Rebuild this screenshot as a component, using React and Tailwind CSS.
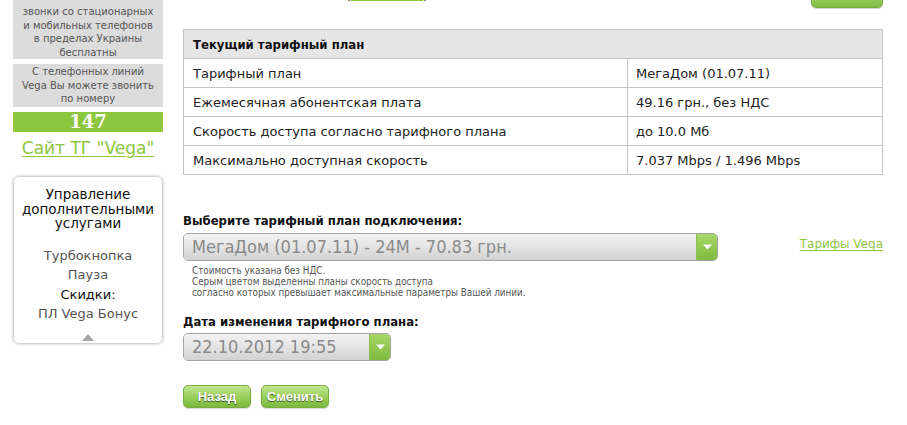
const verdana = "font-['DejaVu_Sans',Verdana,sans-serif]";
const tahoma = "font-['DejaVu_Sans_Condensed','DejaVu_Sans',Tahoma,sans-serif]";

const ROWS = [
  ["Тарифный план", "МегаДом (01.07.11)"],
  ["Ежемесячная абонентская плата", "49.16 грн., без НДС"],
  ["Скорость доступа согласно тарифного плана", "до 10.0 Мб"],
  ["Максимально доступная скорость", "7.037 Mbps / 1.496 Mbps"],
];

function ArrowDown() {
  return (
    <svg width="9" height="6" viewBox="0 0 9 6" className="block">
      <path d="M0 0.5 H9 L4.5 5.5 Z" fill="#fff" />
    </svg>
  );
}

function FakeSelect({ value, width }) {
  return (
    <div
      className={`${width} h-[28px] flex rounded-[5px] border border-[#a3a3a3] overflow-hidden shadow-[inset_0_1px_2px_rgba(0,0,0,0.25)]`}
    >
      <div className="flex-1 flex items-center pl-[8px] bg-gradient-to-b from-[#f2f2f2] via-[#e4e4e4] to-[#d2d2d2]">
        <span className={`${tahoma} text-[18px] leading-none text-[#8a8a8a] whitespace-nowrap`}>
          {value}
        </span>
      </div>
      <div className="w-[21px] flex items-center justify-center bg-gradient-to-b from-[#a8d867] to-[#7fba3e] border-l border-[#8cbf55]">
        <ArrowDown />
      </div>
    </div>
  );
}

function GreenButton({ children }) {
  return (
    <button className="w-[68px] h-[23px] rounded-[5px] border border-[#79ad3f] bg-gradient-to-b from-[#c2e58f] via-[#9cd05c] to-[#7cb83e] text-white font-bold text-[13px] leading-none font-['Liberation_Sans',Arial,sans-serif] [text-shadow:0_1px_1px_rgba(0,0,0,0.6)] shadow-[0_1px_1px_rgba(0,0,0,0.15)]">
      {children}
    </button>
  );
}

export default function App() {
  return (
    <div className={`${verdana} w-[907px] h-[425px] overflow-hidden bg-white text-[#222]`}>
      <div className="flex">
        {/* left column */}
        <div className="ml-[13px] w-[150px] flex flex-col">
          <div className="bg-[#dcdcdc] text-[#555] text-[10px] leading-[13.5px] text-center pt-[5px] h-[59px]">
            звонки со стационарных
            <br />и мобильных телефонов
            <br />в пределах Украины
            <br />бесплатны
          </div>
          <div className="mt-[5px] bg-[#dcdcdc] text-[#555] text-[10px] leading-[13.5px] text-center pt-[1px] h-[43px]">
            С телефонных линий
            <br />Vega Вы можете звонить
            <br />по номеру
          </div>
          <div className="mt-[5px] h-[20px] bg-[#8dc63f] flex items-center justify-center text-white font-bold text-[18px] leading-none font-['DejaVu_Serif',Georgia,serif]">
            147
          </div>
          <a
            href="#"
            className="mt-[7px] text-center text-[17px] leading-[18px] text-[#8dc63f] underline underline-offset-2 whitespace-nowrap"
          >
            Сайт ТГ "Vega"
          </a>
          <div className="mt-[19px] h-[168px] rounded-[6px] border border-[#d0d0d0] shadow-[0_0_3px_rgba(0,0,0,0.25)] flex flex-col items-center pt-[10px]">
            <div className="text-[13.5px] leading-[14.5px] text-center text-[#111]">
              Управление
              <br />
              дополнительными
              <br />
              услугами
            </div>
            <div className="mt-[15px] flex flex-col items-center text-[13px] leading-[19.5px]">
              <span className="text-[#555]">Турбокнопка</span>
              <span className="text-[#555]">Пауза</span>
              <span className="text-[#111]">Скидки:</span>
              <span className="text-[#555]">ПЛ Vega Бонус</span>
            </div>
            <svg width="12" height="7" viewBox="0 0 12 7" className="mt-[10px]">
              <path d="M0 7 L6 0 L12 7 Z" fill="#a8a8a8" />
            </svg>
          </div>
        </div>

        {/* main column */}
        <div className="ml-[20px] w-[700px] flex flex-col">
          <div className="h-[9px] overflow-hidden flex items-end">
            <span className="ml-[163px] mb-[5px] flex items-end text-[13px] leading-[16px] whitespace-nowrap">
              (
              <span className="inline-block w-[72px] h-[3px] mb-[3px] border-b border-[#8dc63f]" />
              )
            </span>
            <button className="ml-auto mb-[1px] w-[72px] h-[24px] rounded-[5px] bg-gradient-to-b from-[#b7e07f] to-[#82bd45] border border-[#79ad3f] text-white font-bold text-[12px] shadow-[0_1px_1px_rgba(0,0,0,0.2)]">
              Выйти
            </button>
          </div>

          <table className="mt-[20px] w-full border-collapse text-[13px] leading-none">
            <tbody>
              <tr className="h-[29px] bg-[#e6e6e6]">
                <td
                  colSpan={2}
                  className={`${tahoma} border border-[#c4c4c4] pl-[9px] font-bold text-[#111]`}
                >
                  Текущий тарифный план
                </td>
              </tr>
              {ROWS.map(([k, v]) => (
                <tr key={k} className="h-[29px]">
                  <td className="w-[444px] border border-[#c4c4c4] pl-[9px] text-[#222]">{k}</td>
                  <td className="border border-[#c4c4c4] pl-[8px] text-[#222]">{v}</td>
                </tr>
              ))}
            </tbody>
          </table>

          <div className={`${tahoma} mt-[38px] font-bold text-[13px] leading-[16px] text-[#111]`}>
            Выберите тарифный план подключения:
          </div>
          <div className="mt-[4px] flex items-center justify-between">
            <FakeSelect width="w-[535px]" value="МегаДом (01.07.11) - 24М - 70.83 грн." />
            <a href="#" className="text-[12px] text-[#8dc63f] underline underline-offset-2 -mt-[6px]">
              Тарифы Vega
            </a>
          </div>
          <div className={`${tahoma} ml-[9px] mt-[4px] text-[9.8px] leading-[11px] text-[#555]`}>
            Стоимость указана без НДС.
            <br />
            Серым цветом выделенны планы скорость доступа
            <br />
            согласно которых превышает максимальные параметры Вашей линии.
          </div>

          <div className={`${tahoma} mt-[16px] font-bold text-[13px] leading-[16px] text-[#111]`}>
            Дата изменения тарифного плана:
          </div>
          <div className="mt-[3px]">
            <FakeSelect width="w-[208px]" value="22.10.2012 19:55" />
          </div>

          <div className="mt-[24px] flex gap-[10px]">
            <GreenButton>Назад</GreenButton>
            <GreenButton>Сменить</GreenButton>
          </div>
        </div>
      </div>
    </div>
  );
}
